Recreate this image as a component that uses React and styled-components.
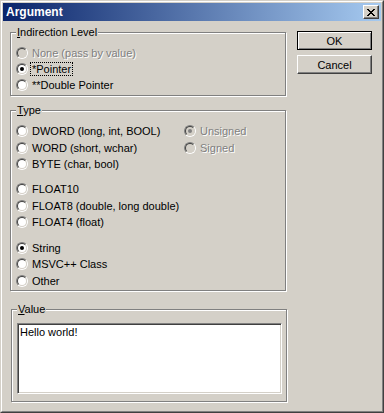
import React from 'react'
import styled, { createGlobalStyle, css } from 'styled-components'

const GlobalStyle = createGlobalStyle`
  html, body { margin: 0; padding: 0; background: #d4d0c8; }
  * { box-sizing: border-box; }
`

const FONT = `"Liberation Sans", Arial, sans-serif`

const Window = styled.div`
  width: 384px;
  height: 413px;
  border: 1px solid;
  border-color: #d4d0c8 #404040 #404040 #d4d0c8;
  background: #d4d0c8;
  font-family: ${FONT};
  font-size: 11px;
  color: #000;
`

const Frame = styled.div`
  height: 100%;
  border: 1px solid;
  border-color: #fff #808080 #808080 #fff;
  padding: 1px;
  display: flex;
  flex-direction: column;
`

const TitleBar = styled.div`
  height: 18px;
  display: flex;
  align-items: center;
  padding: 0 2px 0 3px;
  background: linear-gradient(to right, #0a246a, #a6caf0);
`

const Title = styled.span`
  color: #fff;
  font-weight: bold;
  font-size: 12px;
  line-height: 14px;
`

const CloseButton = styled.button`
  margin-left: auto;
  width: 16px;
  height: 14px;
  padding: 0;
  display: flex;
  align-items: center;
  justify-content: center;
  background: #d4d0c8;
  border: 1px solid;
  border-color: #fff #404040 #404040 #fff;
  box-shadow: inset -1px -1px 0 #808080;
`

const Client = styled.div`
  display: grid;
  grid-template-columns: 276px 75px;
  column-gap: 11px;
  align-items: start;
  padding: 5px 0 0 7px;
`

const LeftColumn = styled.div`
  display: flex;
  flex-direction: column;
`

const Group = styled.fieldset`
  margin: ${p => p.$mt || 0}px 0 0 ${p => p.$ml || 0}px;
  padding: ${p => p.$pt}px 4px ${p => p.$pb}px 5px;
  width: 276px;
  min-width: 0;
  border: 1px solid #808080;
  box-shadow: inset 1px 1px 0 #fff, 1px 1px 0 #fff;
`

const Legend = styled.legend`
  padding: 0 1px;
  font-size: 11px;
  line-height: 13px;
  background: #d4d0c8;
`

const TypeGrid = styled.div`
  display: grid;
  grid-template-columns: 168px 1fr;
  align-items: start;
`

const Column = styled.div`
  display: flex;
  flex-direction: column;
`

const Cluster = styled.div`
  display: flex;
  flex-direction: column;
  margin-top: ${p => p.$mt || 0}px;
`

const Row = styled.div`
  display: flex;
  align-items: center;
  gap: 2px;
  height: ${p => p.$h}px;
`

const RadioCircle = styled.span`
  position: relative;
  flex: none;
  width: 12px;
  height: 12px;
  border-radius: 50%;
  border: 1px solid;
  border-color: #808080 #fff #fff #808080;

  &::before {
    content: '';
    position: absolute;
    inset: 0;
    border-radius: 50%;
    border: 1px solid;
    border-color: #404040 #d4d0c8 #d4d0c8 #404040;
    background: ${p => (p.$disabled ? '#d4d0c8' : '#fff')};
  }

  ${p => p.$checked && css`
    &::after {
      content: '';
      position: absolute;
      left: 3px;
      top: 3px;
      width: 4px;
      height: 4px;
      border-radius: 50%;
      background: ${p.$disabled ? '#808080' : '#000'};
    }
  `}
`

const Label = styled.span`
  padding: 0 1px;
  line-height: 12px;
  white-space: nowrap;
  border: 1px ${p => (p.$focus ? 'dotted #000' : 'solid transparent')};
  color: ${p => (p.$disabled ? '#808080' : '#000')};
  text-shadow: ${p => (p.$disabled ? '1px 1px 0 #fff' : 'none')};
`

const ValueBox = styled.textarea`
  display: block;
  width: 265px;
  height: 71px;
  margin: 0;
  padding: 2px 2px;
  resize: none;
  font-family: ${FONT};
  font-size: 11px;
  line-height: 13px;
  color: #000;
  background: #fff;
  border: 1px solid;
  border-color: #808080 #fff #fff #808080;
  box-shadow: inset 1px 1px 0 #404040, inset -1px -1px 0 #d4d0c8;
  outline: none;
`

const ButtonColumn = styled.div`
  display: flex;
  flex-direction: column;
  gap: 5px;
  padding-top: 5px;
`

const Button = styled.button`
  width: 75px;
  height: 19px;
  padding: 0;
  font-family: ${FONT};
  font-size: 11px;
  color: #000;
  background: #d4d0c8;
  border: 1px solid;
  border-color: #fff #404040 #404040 #fff;
  box-shadow: inset -1px -1px 0 #808080, inset 1px 1px 0 #d4d0c8;

  ${p => p.$default && css`
    border-color: #000;
    box-shadow: inset 1px 1px 0 #fff, inset -1px -1px 0 #808080;
  `}
`

const CloseGlyph = () => (
  <svg width="8" height="7" viewBox="0 0 8 7" shapeRendering="crispEdges">
    <path
      fill="#000"
      d="M0 0h2v1H0zM6 0h2v1H6zM1 1h2v1H1zM5 1h2v1H5zM2 2h4v1H2zM3 3h2v1H3zM2 4h4v1H2zM1 5h2v1H1zM5 5h2v1H5zM0 6h2v1H0zM6 6h2v1H6z"
    />
  </svg>
)

const Radio = ({ label, checked, disabled, focus, h }) => (
  <Row $h={h}>
    <RadioCircle $checked={checked} $disabled={disabled} />
    <Label $disabled={disabled} $focus={focus}>{label}</Label>
  </Row>
)

const clusters = [
  { mt: 0, items: ['DWORD (long, int, BOOL)', 'WORD (short, wchar)', 'BYTE (char, bool)'] },
  { mt: 8.5, items: ['FLOAT10', 'FLOAT8 (double, long double)', 'FLOAT4 (float)'] },
  { mt: 9, items: ['String', 'MSVC++ Class', 'Other'] },
]

const App = () => {
  return (
    <>
      <GlobalStyle />
      <Window>
        <Frame>
          <TitleBar>
            <Title>Argument</Title>
            <CloseButton><CloseGlyph /></CloseButton>
          </TitleBar>
          <Client>
            <LeftColumn>
              <Group $pt={6} $pb={2}>
                <Legend><u>I</u>ndirection Level</Legend>
                <Radio h={16} label="None (pass by value)" disabled />
                <Radio h={16} label="*Pointer" checked focus />
                <Radio h={16} label="**Double Pointer" />
              </Group>

              <Group $mt={8} $pt={6} $pb={1}>
                <Legend><u>T</u>ype</Legend>
                <TypeGrid>
                  <Column>
                    {clusters.map((c, i) => (
                      <Cluster key={i} $mt={c.mt}>
                        {c.items.map(item => (
                          <Radio key={item} h={16.5} label={item} checked={item === 'String'} />
                        ))}
                      </Cluster>
                    ))}
                  </Column>
                  <Column>
                    <Radio h={16.5} label="Unsigned" checked disabled />
                    <Radio h={16.5} label="Signed" disabled />
                  </Column>
                </TypeGrid>
              </Group>

              <Group $mt={12} $ml={1} $pt={7} $pb={7}>
                <Legend><u>V</u>alue</Legend>
                <ValueBox defaultValue="Hello world!" />
              </Group>
            </LeftColumn>

            <ButtonColumn>
              <Button $default>OK</Button>
              <Button>Cancel</Button>
            </ButtonColumn>
          </Client>
        </Frame>
      </Window>
    </>
  )
}

export default App
